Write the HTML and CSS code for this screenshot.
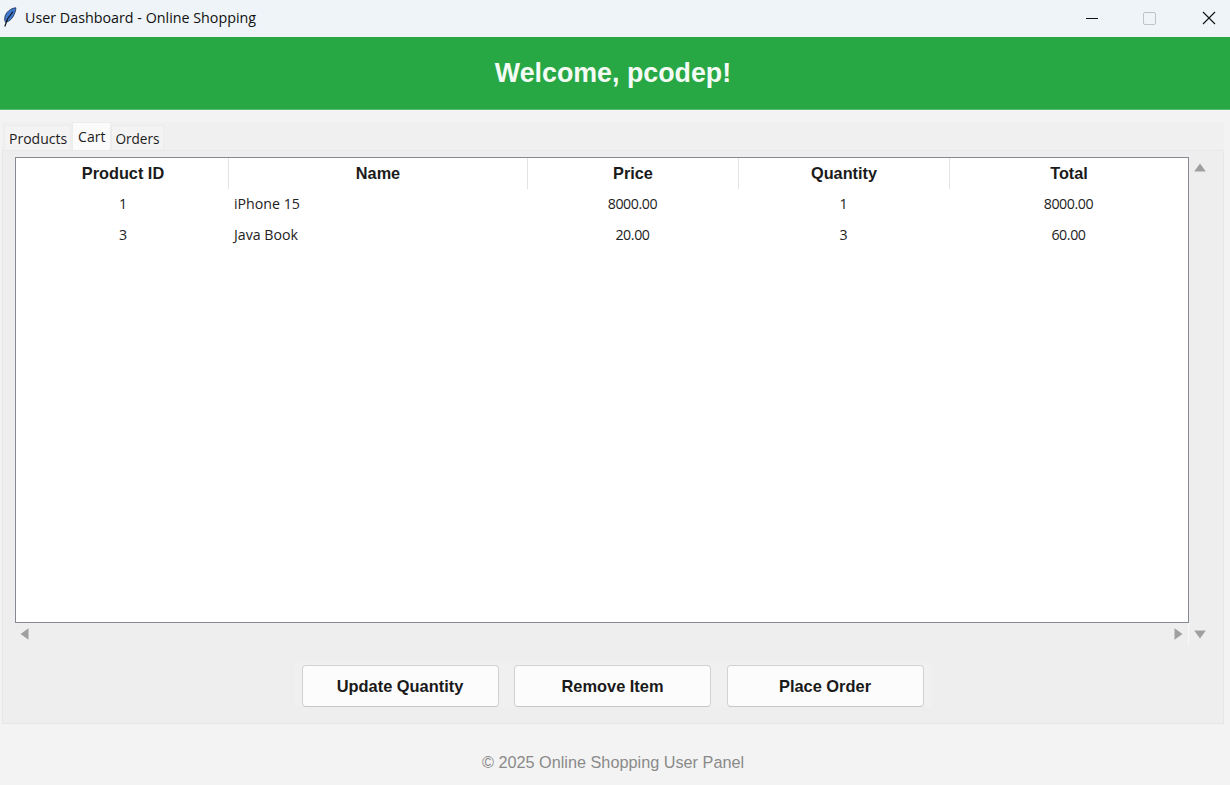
FILE: index.html
```html
<!DOCTYPE html>
<html lang="en">
<head>
<meta charset="utf-8">
<title>User Dashboard - Online Shopping</title>
<link rel="stylesheet" href="styles.css">
</head>
<body>
<div class="window">
  <div class="titlebar">
    <svg class="app-icon" width="14" height="20" viewBox="0 0 14 20"><path d="M12.800.8C7.500 1.200 2.500 5.500 1.800 10.500c-.3 1.800 0 3.500.8 4.800 3.800-.8 7-3.800 8.600-8C12.300 4.800 13 2.500 12.800.8z" fill="#3f7ad0" stroke="#24365a" stroke-width=".9"/><path d="M10 4.500 4.500 12 1.800 19.500" fill="none" stroke="#10151f" stroke-width="1.200"/></svg>
    <span class="title">User Dashboard - Online Shopping</span>
    <div class="controls">
      <svg class="ctl" width="14" height="14" viewBox="0 0 14 14"><path d="M1 7.500h12" stroke="#111" stroke-width="1" fill="none"/></svg>
      <svg class="ctl ctl-max" width="14" height="14" viewBox="0 0 14 14"><rect x=".5" y="1.500" width="12" height="12" rx="1.500" stroke="#bfc3c7" fill="none"/></svg>
      <svg class="ctl" width="14" height="14" viewBox="0 0 14 14"><path d="M1 1l12 12M13 1 1 13" stroke="#111" stroke-width="1.100" fill="none"/></svg>
    </div>
  </div>
  <header class="banner">Welcome, pcodep!</header>
  <main class="content">
    <nav class="tabs">
      <span class="tab">Products</span>
      <span class="tab active">Cart</span>
      <span class="tab">Orders</span>
    </nav>
    <section class="panel">
      <div class="table-area">
        <div class="table-box">
          <div class="row head">
            <div class="cell">Product ID</div>
            <div class="cell">Name</div>
            <div class="cell">Price</div>
            <div class="cell">Quantity</div>
            <div class="cell">Total</div>
          </div>
          <div class="row">
            <div class="cell">1</div>
            <div class="cell left">iPhone 15</div>
            <div class="cell num">8000.00</div>
            <div class="cell">1</div>
            <div class="cell num">8000.00</div>
          </div>
          <div class="row">
            <div class="cell">3</div>
            <div class="cell left">Java Book</div>
            <div class="cell num">20.00</div>
            <div class="cell">3</div>
            <div class="cell num">60.00</div>
          </div>
        </div>
        <div class="vscroll">
          <svg width="12" height="9" viewBox="0 0 12 9"><path d="M6 .5l5.800 8H.2z" fill="#9f9f9f"/></svg>
          <svg width="12" height="9" viewBox="0 0 12 9"><path d="M6 8.500.2.500h11.600z" fill="#9f9f9f"/></svg>
        </div>
        <div class="hscroll">
          <svg width="9" height="12" viewBox="0 0 9 12"><path d="M.5 6l8-5.800v11.600z" fill="#9f9f9f"/></svg>
          <svg width="9" height="12" viewBox="0 0 9 12"><path d="M8.500 6 .5.200v11.600z" fill="#9f9f9f"/></svg>
        </div>
      </div>
      <div class="actions">
        <div class="actions-inner">
          <button class="btn">Update Quantity</button>
          <button class="btn">Remove Item</button>
          <button class="btn">Place Order</button>
        </div>
      </div>
    </section>
  </main>
  <footer class="footer">© 2025 Online Shopping User Panel</footer>
</div>
</body>
</html>
```

FILE: styles.css
```css
* { box-sizing: border-box; }
html, body { margin: 0; height: 100%; }
body { background: #f3f3f3; overflow: hidden; }
.window { width: 1230px; height: 785px; display: flex; flex-direction: column; }

.titlebar { height: 37px; flex: none; background: #eef4f8; display: flex; align-items: center; padding-left: 3px; }
.app-icon { flex: none; margin-right: 8px; margin-top: -3px; }
.title { font: 14.3px/34px "Open Sans", sans-serif; color: #111; height: 34px; margin-top: -2px; }
.controls { margin-left: auto; display: flex; align-items: center; gap: 44px; padding-right: 14px; margin-top: -1px; }
.ctl { display: block; }
.ctl-max { margin-right: 1px; }

.banner { height: 73px; flex: none; background: #28a745; border-bottom: 1px solid #5cbd72; color: #f4fbf5; font: bold 26.8px/73px "Liberation Sans", sans-serif; text-align: center; padding-right: 4px; }

.content { flex: none; height: 614px; padding: 12px 6px 0 2px; display: flex; flex-direction: column; }
.tabs { height: 28px; flex: none; background: #f0f0f0; display: flex; align-items: flex-end; padding-left: 2px; }
.tab { height: 25px; padding: 0 3px 0 4px; background: #f3f3f3; border: 1px solid #ececec; border-bottom: 0; font: 14px/25px "Open Sans", sans-serif; color: #1c1c1c; }
.tab:last-child { font-size: 13.6px; padding: 0 3px 0 3px; }
.tab.active { height: 28px; background: #fbfbfb; line-height: 27px; padding: 0 5px; margin: 0 0 0 1px; }

.panel { height: 574px; background: #eeeeee; border: 1px solid #e6e6e6; border-top-color: #e9e9e9; display: flex; flex-direction: column; padding: 6px 0 0 12px; }
.table-area { display: grid; grid-template-columns: 1174px 24px; grid-template-rows: 466px 22px; }
.table-box { background: #fff; border: 1px solid #868b92; }
.row { display: grid; grid-template-columns: 212px 299px 211px 211px 1fr; height: 31px; font: 14.2px/31px "Open Sans", sans-serif; color: #222; text-align: center; }
.row.head { height: 30px; font: bold 16.3px/31px "Liberation Sans", sans-serif; color: #1b1b1b; }
.row.head .cell + .cell { border-left: 1px solid #e4e4e4; }
.cell:first-child { padding-left: 2px; }
.cell.left { text-align: left; padding-left: 6px; }
.cell.num { letter-spacing: -.4px; }

.vscroll { grid-row: 1 / 3; grid-column: 2; display: flex; flex-direction: column; justify-content: space-between; align-items: center; padding: 6px 2px 6px 0; }
.hscroll { display: flex; justify-content: space-between; align-items: center; padding: 0 5px; border-right: 1px solid #f7f7f7; }

.actions { display: flex; justify-content: center; padding-top: 18px; margin-left: -13px; }
.actions-inner { display: flex; gap: 15.500px; padding: 2px 8px 0; background: #f0f0f0; }
.btn { width: 197px; height: 42px; background: #fcfcfc; border: 1px solid #d2d2d2; border-bottom-color: #c6c6c6; border-radius: 4px; font: bold 16.4px "Liberation Sans", sans-serif; color: #1a1a1a; padding: 0; }

.footer { flex: 1; text-align: center; font: 16.25px/1 "Liberation Sans", sans-serif; color: #8a8a8a; padding-top: 30px; padding-right: 4px; }
```
